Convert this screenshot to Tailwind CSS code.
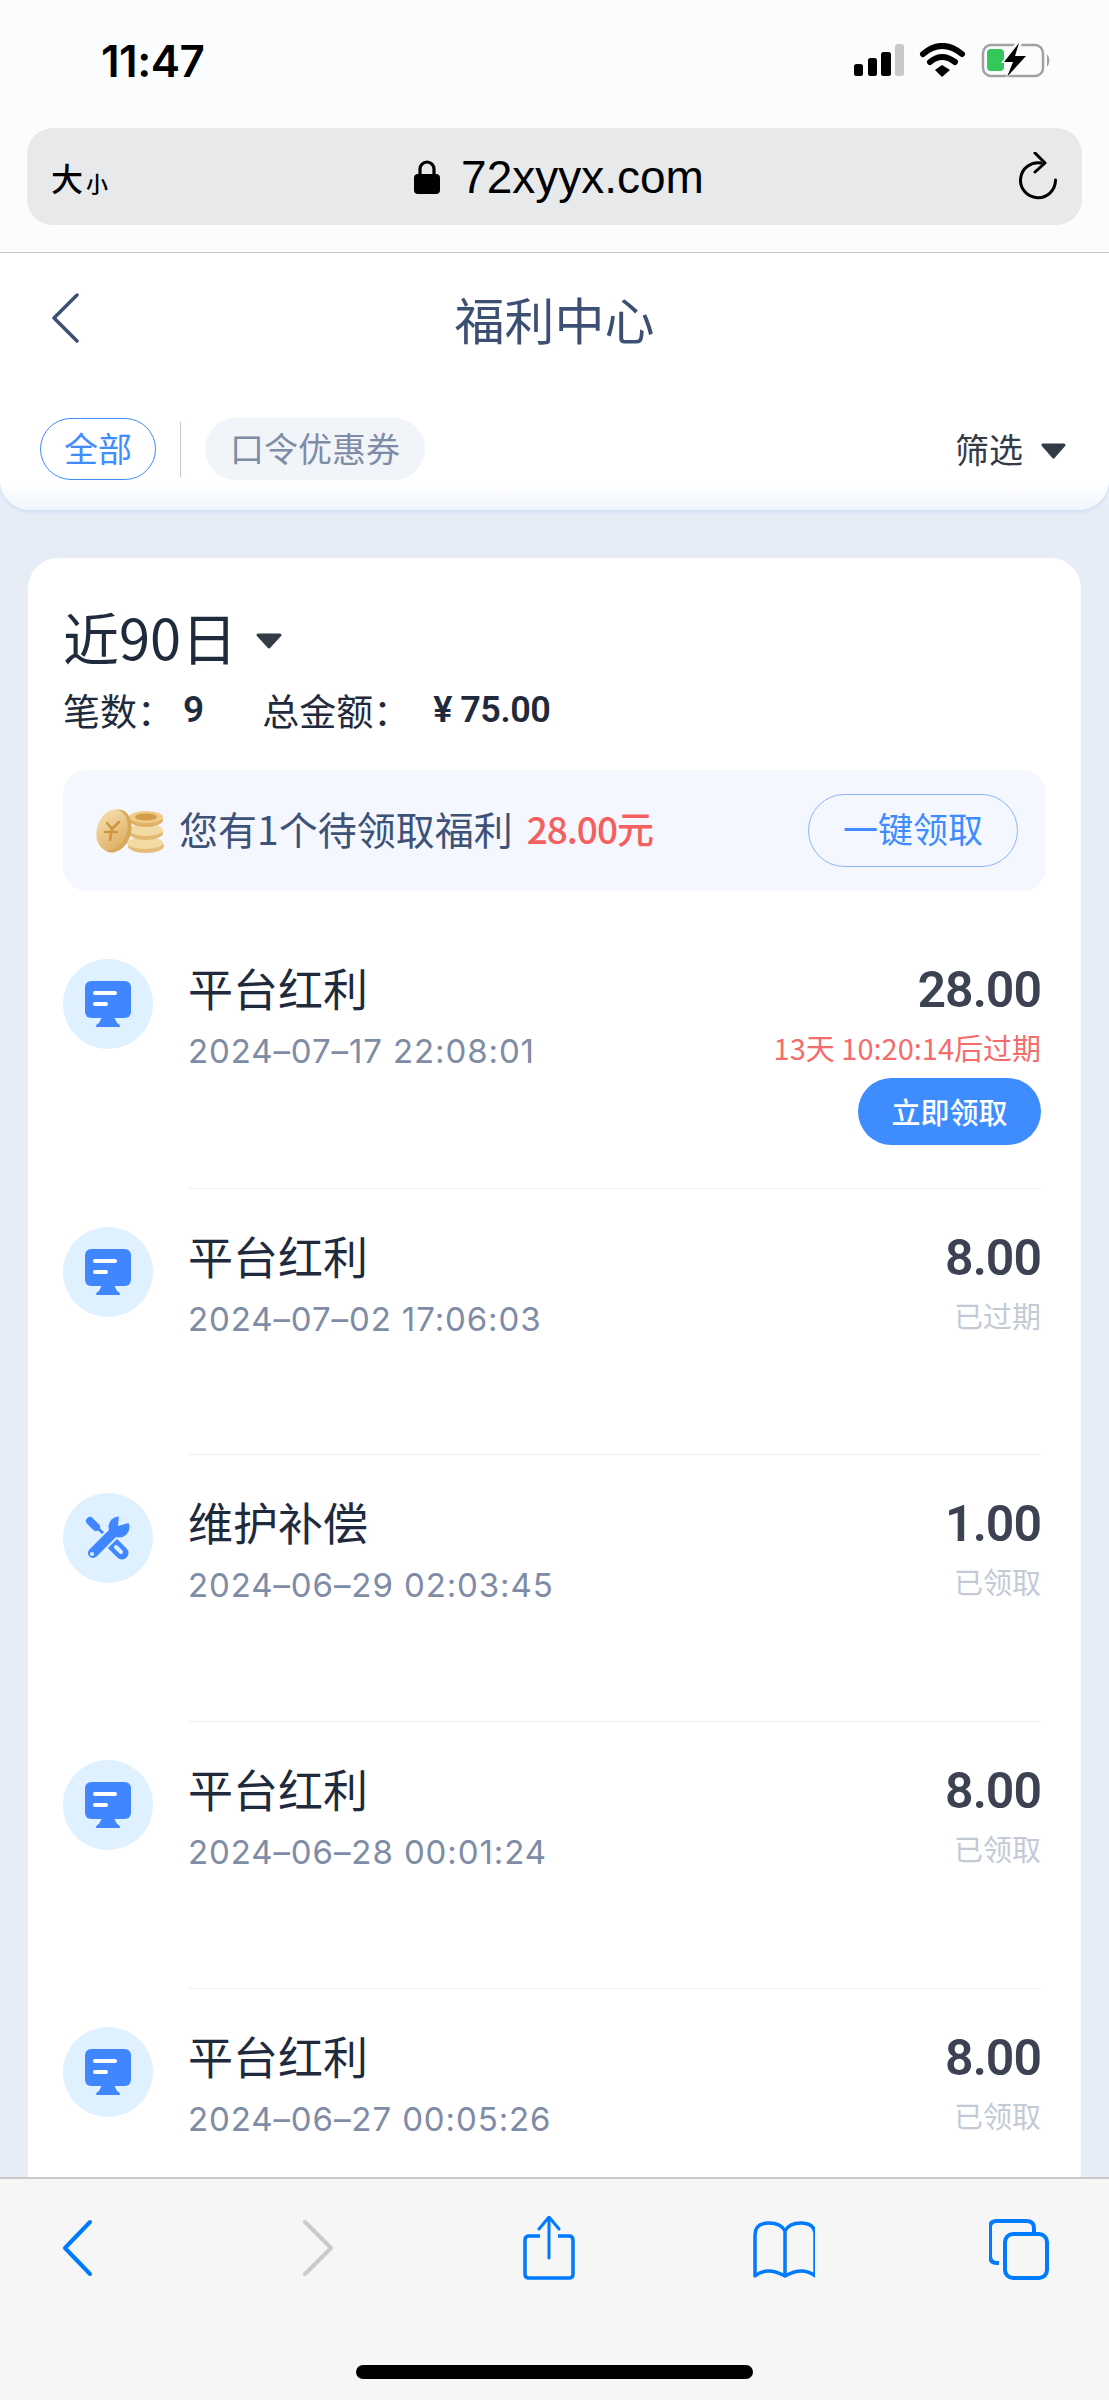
<!DOCTYPE html>
<html lang="zh-CN">
<head>
  <meta charset="UTF-8" />
  <meta name="viewport" content="width=device-width, initial-scale=1.0"/>
  <title>福利中心</title>
  <script src="https://cdn.jsdelivr.net/npm/@tailwindcss/browser@4"></script>
</head>
<body class="bg-[#e6edf7]">
<div class="w-[1109px] h-[2400px] overflow-hidden flex flex-col font-['Noto_Sans_CJK_SC','Noto_Sans',sans-serif]">

  <!-- Safari top -->
  <div class="h-[253px] shrink-0 bg-[#fbfcfe] border-b border-[#c9c9cc]">
    <div class="h-[128px] flex items-start pl-[101px] pr-[57px] pt-[43px] justify-between">
      <span class="font-['Inter',sans-serif] font-semibold text-[44px] leading-[36px] tracking-[-0.5px] text-black">11:47</span>
      <svg width="198" height="36" viewBox="854 43 198 36" class="block">
        <rect x="854" y="64" width="9" height="12" rx="2.5" fill="#000"/>
        <rect x="868" y="58" width="9" height="18" rx="2.5" fill="#000"/>
        <rect x="881" y="52" width="10" height="24" rx="2.5" fill="#000"/>
        <rect x="895" y="44" width="9" height="32" rx="2.5" fill="#c8c8c8"/>
        <path d="M923 54 Q942 38 962 54" fill="none" stroke="#000" stroke-width="6" stroke-linecap="round"/>
        <path d="M930 62 Q942 52 955 62" fill="none" stroke="#000" stroke-width="6" stroke-linecap="round"/>
        <path d="M935 70 L942 65 L950 70 L942 77 Z" fill="#000"/>
        <rect x="983" y="45" width="60" height="31" rx="8" fill="none" stroke="#a2a2a2" stroke-width="2.5"/>
        <path d="M1047 54 Q1052 60 1047 67 Z" fill="#a2a2a2"/>
        <rect x="987" y="49" width="17" height="22" rx="4" fill="#34c759"/>
        <path d="M1017 41 L1001 63 L1011 63 L1005 80 L1029 55 L1017 55 L1023 41 Z" fill="#fbfcfe"/>
        <path d="M1019 43 L1004 62 L1013 62 L1007 77 L1026 56 L1015 56 Z" fill="#000"/>
      </svg>
    </div>
    <div class="mx-[27px] h-[97px] rounded-[26px] bg-[#e8e9eb] flex items-center justify-between pl-[24px] pr-[25px]">
      <div class="flex items-end text-black leading-none">
        <span class="text-[32px] font-medium">大</span><span class="text-[22px] font-medium ml-[3px]">小</span>
      </div>
      <div class="flex items-center gap-[21px] mr-[8px]">
        <svg width="26" height="34" viewBox="0 0 26 34" class="block">
          <path d="M6 15 V9 A7 7 0 0 1 20 9 V15" fill="none" stroke="#000" stroke-width="3.2"/>
          <rect x="0" y="14" width="26" height="20" rx="4" fill="#000"/>
        </svg>
        <span class="font-['Liberation_Sans',sans-serif] text-[46px] leading-none text-black">72xyyx.com</span>
      </div>
      <svg width="39" height="49" viewBox="0 0 39 49" class="block">
        <path d="M23 11 A17.5 17.5 0 1 0 37.5 28" fill="none" stroke="#000" stroke-width="3" stroke-linecap="round"/>
        <path d="M17 1 L27 11 L17 20" fill="none" stroke="#000" stroke-width="3" stroke-linecap="round" stroke-linejoin="round"/>
      </svg>
    </div>
  </div>

  <!-- Page header -->
  <div class="h-[257px] shrink-0 rounded-b-[30px] bg-linear-to-b from-white from-[90%] to-[#f0f5fc] shadow-[0_3px_3px_#d3e2f4] px-[40px] pt-[35px]">
    <div class="flex items-center justify-between h-[60px]">
      <svg width="30" height="50" viewBox="0 0 30 50" class="block ml-[10px]">
        <path d="M27 2 L4 25 L27 48" fill="none" stroke="#3d4f73" stroke-width="3.5" stroke-linecap="round" stroke-linejoin="round"/>
      </svg>
      <h1 class="text-[50px] leading-[60px] font-normal text-[#3d4f73] -ml-[26px]">福利中心</h1>
      <div class="w-[14px]"></div>
    </div>
    <div class="flex items-center mt-[70px] h-[62px]">
      <span class="w-[116px] h-[62px] rounded-full border border-[#3f8cff] text-[#3f8cff] text-[34px] leading-[58px] text-center">全部</span>
      <span class="w-px h-[55px] bg-[#bfc8d6] ml-[24px] mr-[24px]"></span>
      <span class="w-[220px] h-[62px] rounded-full bg-[#f1f4f9] text-[#7f8ca6] text-[34px] leading-[60px] text-center">口令优惠券</span>
      <span class="ml-auto text-[34px] leading-[60px] text-[#333b47]">筛选</span>
      <svg width="25" height="16" viewBox="0 0 25 16" class="block ml-[18px] mr-[3px] mt-[4px]">
        <path d="M2 2 H23 L12.5 14 Z" fill="#333b47" stroke="#333b47" stroke-width="3" stroke-linejoin="round"/>
      </svg>
    </div>
  </div>

  <!-- Content -->
  <div class="flex-1 min-h-0 overflow-hidden pt-[48px] px-[28px]">
    <div class="bg-white rounded-t-[30px] pt-[48px] px-[35px] pb-[40px]">
      <div class="flex items-center h-[60px]">
        <span class="text-[56px] leading-[60px] text-[#1f2a3d]">近90日</span>
        <svg width="28" height="18" viewBox="0 0 28 18" class="block ml-[18px] mt-[10px]">
          <path d="M3 3 H25 L14 15 Z" fill="#333b47" stroke="#333b47" stroke-width="3" stroke-linejoin="round"/>
        </svg>
      </div>
      <div class="flex items-center h-[40px] mt-[24px] text-[#1f2a3d] text-[37px] leading-[40px]">
        <span>笔数：</span>
        <span class="font-['Roboto',sans-serif] font-semibold text-[37px] ml-[9px]">9</span>
        <span class="ml-[58px]">总金额：</span>
        <span class="font-['Roboto',sans-serif] font-semibold ml-[23px] text-[36px] tracking-[-0.5px]">¥ 75.00</span>
      </div>

      <!-- Pending banner -->
      <div class="mt-[40px] h-[121px] rounded-[24px] bg-[#f4f8fe] flex items-center pl-[33px] pr-[28px]">
        <svg width="68" height="46" viewBox="0 0 68 46" class="block shrink-0">
          <defs>
            <linearGradient id="gold" x1="0" y1="0" x2="1" y2="1">
              <stop offset="0" stop-color="#f8e3b4"/>
              <stop offset="1" stop-color="#dba95c"/>
            </linearGradient>
          </defs>
          <ellipse cx="50" cy="38" rx="18" ry="7" fill="#e5bd78"/>
          <ellipse cx="49" cy="35" rx="18" ry="6" fill="#f3d9a3"/>
          <ellipse cx="50" cy="25" rx="17" ry="7" fill="#e3b96f"/>
          <ellipse cx="50" cy="22" rx="17" ry="6" fill="#f3d9a3"/>
          <ellipse cx="50" cy="12" rx="17" ry="7" fill="#e0b266"/>
          <ellipse cx="50" cy="9" rx="17" ry="6" fill="#eecb88"/>
          <ellipse cx="50" cy="9" rx="11" ry="3.5" fill="#d39c4a"/>
          <ellipse cx="19" cy="23" rx="16" ry="22" transform="rotate(18 19 23)" fill="#d9a65a"/>
          <ellipse cx="16" cy="22" rx="15" ry="21" transform="rotate(18 16 22)" fill="url(#gold)"/>
          <path d="M11 15 L16 21 L23 14 M16 21 L14 32 M9 24 L21 24" fill="none" stroke="#cf9440" stroke-width="2.5" stroke-linecap="round"/>
        </svg>
        <span class="ml-[15px] -mt-[5px] text-[39px] leading-[60px] text-[#3e5278]">您有1个待领取福利</span>
        <span class="ml-[14px] -mt-[5px] text-[37px] leading-[60px] font-medium text-[#f55f5f] tracking-[-1px]">28.00元</span>
        <span class="ml-auto w-[210px] h-[73px] rounded-full border border-[#8ab4fa] text-[#3f8cff] text-[35px] leading-[65px] text-center">一键领取</span>
      </div>

      <!-- Records -->
      <div class="mt-[30px] mr-[5px]">
        <div class="flex h-[268px]">
          <div class="w-[90px] h-[90px] mt-[38px] rounded-full bg-[#dff0ff] shrink-0">
            <svg width="90" height="90" viewBox="0 0 90 90" class="block">
              <path d="M39 58 H51 L54 64 Q57 65 57 68 H33 Q33 65 36 64 Z" fill="#3f86ff"/>
              <rect x="22" y="22" width="46" height="37" rx="6" fill="#3f86ff"/>
              <rect x="30" y="32" width="24" height="4" rx="2" fill="#fff"/>
              <rect x="30" y="43" width="15" height="4" rx="2" fill="#fff"/>
            </svg>
          </div>
          <div class="ml-[35px] flex-1 border-b border-[#eceff4] flex justify-between pt-[37px]">
            <div>
              <div class="text-[45px] leading-[60px] text-[#1f2a3d]">平台红利</div>
              <div class="mt-[13px] font-['Inter',sans-serif] text-[33px] leading-[40px] tracking-[0.9px] text-[#7f8ca6]">2024–07–17 22:08:01</div>
            </div>
            <div class="flex flex-col items-end pt-[2px]">
              <div class="font-['Roboto',sans-serif] font-semibold text-[50px] leading-[60px] tracking-[-1px] text-[#3d4252]">28.00</div>
              <div class="mt-[10px] text-[29px] leading-[34px] text-[#f56c6c]">13天 10:20:14后过期</div>
              <div class="mt-[14px] w-[183px] h-[67px] rounded-full bg-[#3f8cff] text-white text-[29px] leading-[67px] text-center font-medium">立即领取</div>
            </div>
          </div>
        </div>

        <div class="flex h-[266px]">
          <div class="w-[90px] h-[90px] mt-[38px] rounded-full bg-[#dff0ff] shrink-0">
            <svg width="90" height="90" viewBox="0 0 90 90" class="block">
              <path d="M39 58 H51 L54 64 Q57 65 57 68 H33 Q33 65 36 64 Z" fill="#3f86ff"/>
              <rect x="22" y="22" width="46" height="37" rx="6" fill="#3f86ff"/>
              <rect x="30" y="32" width="24" height="4" rx="2" fill="#fff"/>
              <rect x="30" y="43" width="15" height="4" rx="2" fill="#fff"/>
            </svg>
          </div>
          <div class="ml-[35px] flex-1 border-b border-[#eceff4] flex justify-between pt-[37px]">
            <div>
              <div class="text-[45px] leading-[60px] text-[#1f2a3d]">平台红利</div>
              <div class="mt-[13px] font-['Inter',sans-serif] text-[33px] leading-[40px] tracking-[0.9px] text-[#7f8ca6]">2024–07–02 17:06:03</div>
            </div>
            <div class="flex flex-col items-end pt-[2px]">
              <div class="font-['Roboto',sans-serif] font-semibold text-[50px] leading-[60px] tracking-[-1px] text-[#3d4252]">8.00</div>
              <div class="mt-[10px] text-[29px] leading-[34px] text-[#c3cad6]">已过期</div>
            </div>
          </div>
        </div>

        <div class="flex h-[267px]">
          <div class="w-[90px] h-[90px] mt-[38px] rounded-full bg-[#dff0ff] shrink-0">
            <svg width="90" height="90" viewBox="0 0 90 90" class="block">
              <path d="M27 28 L41 41" fill="none" stroke="#3f86ff" stroke-width="3"/>
              <path d="M27 28 L33 34" fill="none" stroke="#3f86ff" stroke-width="8" stroke-linecap="round"/>
              <path d="M46 47 L59 60" fill="none" stroke="#3f86ff" stroke-width="13" stroke-linecap="round"/>
              <path d="M53 54 L58 59" fill="none" stroke="#dff0ff" stroke-width="4" stroke-linecap="round"/>
              <path d="M28 62 L50 40" fill="none" stroke="#dff0ff" stroke-width="14" stroke-linecap="round"/>
              <path d="M30 60 L50 40" fill="none" stroke="#3f86ff" stroke-width="10" stroke-linecap="round"/>
              <circle cx="56" cy="34" r="10.5" fill="#3f86ff"/>
              <path d="M55 33 L56 22 L69 29 Z" fill="#dff0ff"/>
              <circle cx="29" cy="61" r="2" fill="#dff0ff"/>
            </svg>
          </div>
          <div class="ml-[35px] flex-1 border-b border-[#eceff4] flex justify-between pt-[37px]">
            <div>
              <div class="text-[45px] leading-[60px] text-[#1f2a3d]">维护补偿</div>
              <div class="mt-[13px] font-['Inter',sans-serif] text-[33px] leading-[40px] tracking-[0.9px] text-[#7f8ca6]">2024–06–29 02:03:45</div>
            </div>
            <div class="flex flex-col items-end pt-[2px]">
              <div class="font-['Roboto',sans-serif] font-semibold text-[50px] leading-[60px] tracking-[-1px] text-[#3d4252]">1.00</div>
              <div class="mt-[10px] text-[29px] leading-[34px] text-[#c3cad6]">已领取</div>
            </div>
          </div>
        </div>

        <div class="flex h-[267px]">
          <div class="w-[90px] h-[90px] mt-[38px] rounded-full bg-[#dff0ff] shrink-0">
            <svg width="90" height="90" viewBox="0 0 90 90" class="block">
              <path d="M39 58 H51 L54 64 Q57 65 57 68 H33 Q33 65 36 64 Z" fill="#3f86ff"/>
              <rect x="22" y="22" width="46" height="37" rx="6" fill="#3f86ff"/>
              <rect x="30" y="32" width="24" height="4" rx="2" fill="#fff"/>
              <rect x="30" y="43" width="15" height="4" rx="2" fill="#fff"/>
            </svg>
          </div>
          <div class="ml-[35px] flex-1 border-b border-[#eceff4] flex justify-between pt-[37px]">
            <div>
              <div class="text-[45px] leading-[60px] text-[#1f2a3d]">平台红利</div>
              <div class="mt-[13px] font-['Inter',sans-serif] text-[33px] leading-[40px] tracking-[0.9px] text-[#7f8ca6]">2024–06–28 00:01:24</div>
            </div>
            <div class="flex flex-col items-end pt-[2px]">
              <div class="font-['Roboto',sans-serif] font-semibold text-[50px] leading-[60px] tracking-[-1px] text-[#3d4252]">8.00</div>
              <div class="mt-[10px] text-[29px] leading-[34px] text-[#c3cad6]">已领取</div>
            </div>
          </div>
        </div>

        <div class="flex h-[267px]">
          <div class="w-[90px] h-[90px] mt-[38px] rounded-full bg-[#dff0ff] shrink-0">
            <svg width="90" height="90" viewBox="0 0 90 90" class="block">
              <path d="M39 58 H51 L54 64 Q57 65 57 68 H33 Q33 65 36 64 Z" fill="#3f86ff"/>
              <rect x="22" y="22" width="46" height="37" rx="6" fill="#3f86ff"/>
              <rect x="30" y="32" width="24" height="4" rx="2" fill="#fff"/>
              <rect x="30" y="43" width="15" height="4" rx="2" fill="#fff"/>
            </svg>
          </div>
          <div class="ml-[35px] flex-1 flex justify-between pt-[37px]">
            <div>
              <div class="text-[45px] leading-[60px] text-[#1f2a3d]">平台红利</div>
              <div class="mt-[13px] font-['Inter',sans-serif] text-[33px] leading-[40px] tracking-[0.9px] text-[#7f8ca6]">2024–06–27 00:05:26</div>
            </div>
            <div class="flex flex-col items-end pt-[2px]">
              <div class="font-['Roboto',sans-serif] font-semibold text-[50px] leading-[60px] tracking-[-1px] text-[#3d4252]">8.00</div>
              <div class="mt-[10px] text-[29px] leading-[34px] text-[#c3cad6]">已领取</div>
            </div>
          </div>
        </div>
      </div>
    </div>
  </div>

  <!-- Safari bottom bar -->
  <div class="h-[223px] shrink-0 bg-[#f6f6f6] border-t-2 border-[#c9c9cc] pt-[37px]">
    <div class="flex justify-between pl-[47px] pr-[60px] h-[64px]">
      <svg width="60" height="64" viewBox="0 0 60 64" class="block">
        <path d="M43 6 L18 32 L43 58" fill="none" stroke="#007aff" stroke-width="4" stroke-linecap="round" stroke-linejoin="round"/>
      </svg>
      <svg width="60" height="64" viewBox="-5 0 60 64" class="block">
        <path d="M18 6 L44 32 L18 58" fill="none" stroke="#cbcbcb" stroke-width="4" stroke-linecap="round" stroke-linejoin="round"/>
      </svg>
      <svg width="60" height="64" viewBox="-3 0 60 64" class="block">
        <path d="M21 20 H10 Q6 20 6 24 V58 Q6 62 10 62 H50 Q54 62 54 58 V24 Q54 20 50 20 H39" fill="none" stroke="#007aff" stroke-width="3.5"/>
        <path d="M30 42 V2 M20 13 L30 1 L40 13" fill="none" stroke="#007aff" stroke-width="3" stroke-linecap="round"/>
      </svg>
      <svg width="64" height="64" viewBox="-2 0 64 64" class="block">
        <path d="M32 15 Q28 7 16 7 Q2 7 2 19 V60 Q14 50 32 60 Q50 50 62 60 V19 Q62 7 48 7 Q36 7 32 15 Z M32 15 V60" fill="none" stroke="#007aff" stroke-width="3.5" stroke-linejoin="round"/>
      </svg>
      <svg width="60" height="64" viewBox="0 0 60 64" class="block">
        <path d="M10 47 H8 Q1 47 1 40 V11 Q1 5 8 5 H37 Q45 5 45 12 V17" fill="none" stroke="#007aff" stroke-width="4"/>
        <rect x="16" y="18" width="42" height="44" rx="8" fill="none" stroke="#007aff" stroke-width="4"/>
      </svg>
    </div>
    <div class="mt-[85px] mx-auto w-[397px] h-[14px] rounded-full bg-black"></div>
  </div>
</div>
</body>
</html>
